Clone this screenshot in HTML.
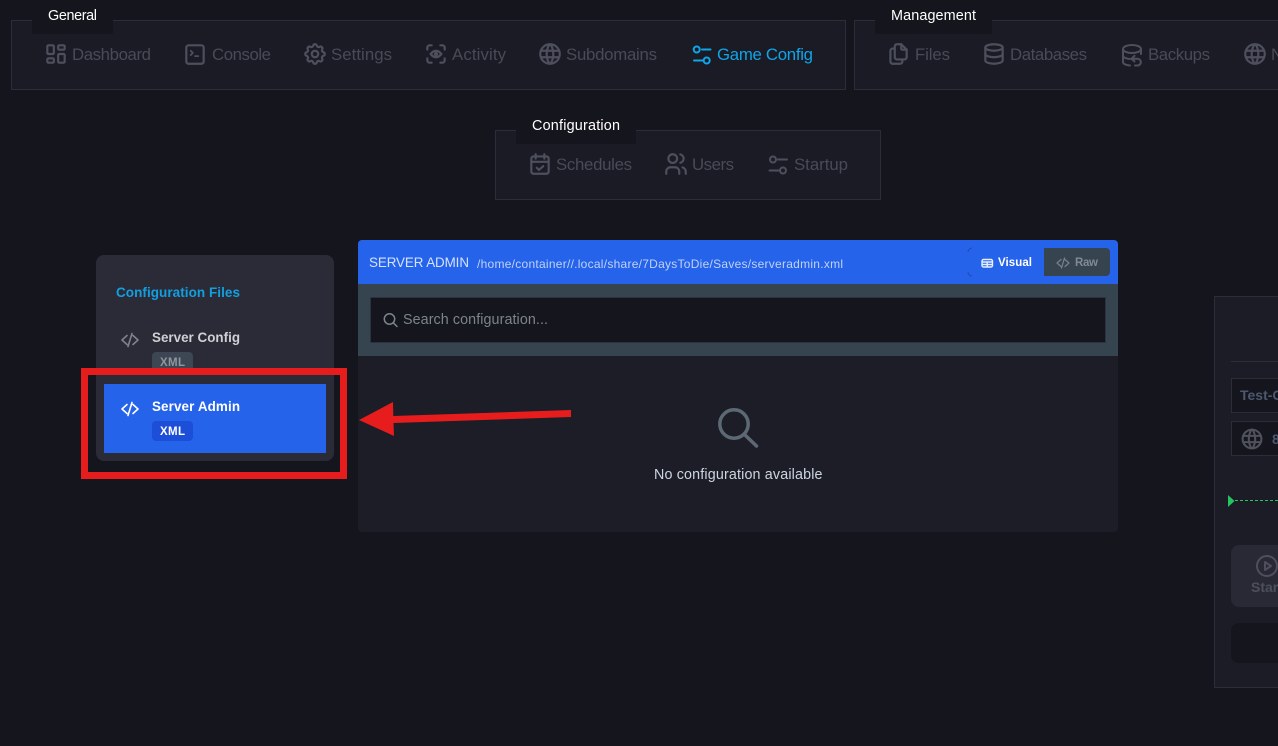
<!DOCTYPE html>
<html lang="en"><head><meta charset="utf-8"><title>Server Admin</title>
<style>
html,body{margin:0;padding:0;width:1278px;height:746px;overflow:hidden;background:#15151e}
svg{display:block}
text{font-family:"Liberation Sans",sans-serif}
.n{font-size:16.8px;fill:#484a56}
.l{font-size:14.4px;fill:#fff}
.i{fill:none;stroke:#4d505c;stroke-width:2;stroke-linecap:round;stroke-linejoin:round}
.b{font-weight:700}
</style></head><body>
<svg width="1278" height="746" viewBox="0 0 1278 746" xmlns="http://www.w3.org/2000/svg">
<rect width="1278" height="746" fill="#15151e"/>

<!-- nav boxes -->
<rect x="11.5" y="20.5" width="834" height="69" fill="#1a1b25" stroke="#2c2d3a"/>
<rect x="854.5" y="20.5" width="440" height="69" fill="#1a1b25" stroke="#2c2d3a"/>
<rect x="495.5" y="130.5" width="385" height="69" fill="#1a1b25" stroke="#2c2d3a"/>
<rect x="32" y="0" width="81" height="34" fill="#15151e"/>
<rect x="875" y="0" width="117" height="34" fill="#15151e"/>
<rect x="516" y="110" width="120" height="34" fill="#15151e"/>
<text class="l" x="48" y="20" textLength="49">General</text>
<text class="l" x="891" y="20" textLength="85">Management</text>
<text class="l" x="532" y="130" textLength="88">Configuration</text>

<text class="n" x="72" y="60" textLength="79">Dashboard</text>
<text class="n" x="212" y="60" textLength="59">Console</text>
<text class="n" x="331" y="60" textLength="61">Settings</text>
<text class="n" x="452" y="60" textLength="54">Activity</text>
<text class="n" x="566" y="60" textLength="91">Subdomains</text>
<text class="n" x="717" y="60" textLength="96" style="fill:#0ea5e9">Game Config</text>
<text class="n" x="915" y="60" textLength="35">Files</text>
<text class="n" x="1010" y="60" textLength="77">Databases</text>
<text class="n" x="1148" y="60" textLength="62">Backups</text>
<text class="n" x="1271" y="60">N</text>
<text class="n" x="556" y="170" textLength="76">Schedules</text>
<text class="n" x="692" y="170" textLength="42">Users</text>
<text class="n" x="794" y="170" textLength="54">Startup</text>

<!-- dashboard -->
<g class="i" transform="translate(43,41) scale(1.0833)"><path d="M5 4h4a1 1 0 0 1 1 1v6a1 1 0 0 1 -1 1h-4a1 1 0 0 1 -1 -1v-6a1 1 0 0 1 1 -1"/><path d="M5 16h4a1 1 0 0 1 1 1v2a1 1 0 0 1 -1 1h-4a1 1 0 0 1 -1 -1v-2a1 1 0 0 1 1 -1"/><path d="M15 12h4a1 1 0 0 1 1 1v6a1 1 0 0 1 -1 1h-4a1 1 0 0 1 -1 -1v-6a1 1 0 0 1 1 -1"/><path d="M15 4h4a1 1 0 0 1 1 1v2a1 1 0 0 1 -1 1h-4a1 1 0 0 1 -1 -1v-2a1 1 0 0 1 1 -1"/></g>
<!-- console -->
<g class="i" transform="translate(182,41) scale(1.0833)"><rect x="4" y="4" width="16" height="17" rx="2"/><path d="M8 9l2 2l-2 2M12 14h3" stroke-width="1.6"/></g>
<!-- settings -->
<g class="i" transform="translate(302,41) scale(1.0833)"><path d="M10.325 4.317c.426 -1.756 2.924 -1.756 3.35 0a1.724 1.724 0 0 0 2.573 1.066c1.543 -.94 3.31 .826 2.37 2.37a1.724 1.724 0 0 0 1.065 2.572c1.756 .426 1.756 2.924 0 3.35a1.724 1.724 0 0 0 -1.066 2.573c.94 1.543 -.826 3.31 -2.37 2.37a1.724 1.724 0 0 0 -2.572 1.065c-.426 1.756 -2.924 1.756 -3.35 0a1.724 1.724 0 0 0 -2.573 -1.066c-1.543 .94 -3.31 -.826 -2.37 -2.37a1.724 1.724 0 0 0 -1.065 -2.572c-1.756 -.426 -1.756 -2.924 0 -3.35a1.724 1.724 0 0 0 1.066 -2.573c-.94 -1.543 .826 -3.31 2.37 -2.37c1 .608 2.296 .07 2.572 -1.065z"/><circle cx="12" cy="12" r="3"/></g>
<!-- activity -->
<g class="i" transform="translate(423,41) scale(1.0833)"><path d="M4 8v-2a2 2 0 0 1 2 -2h2M4 16v2a2 2 0 0 0 2 2h2M16 4h2a2 2 0 0 1 2 2v2M16 20h2a2 2 0 0 0 2 -2v-2"/><path d="M7 12c3.333 -4 6.667 -4 10 0c-3.333 4 -6.667 4 -10 0"/><circle cx="12" cy="12" r="1"/></g>
<!-- subdomains -->
<g class="i" transform="translate(537,41) scale(1.0833)"><path d="M3 12a9 9 0 1 0 18 0a9 9 0 0 0 -18 0M3.6 9h16.8M3.6 15h16.8M11.5 3a17 17 0 0 0 0 18M12.5 3a17 17 0 0 1 0 18"/></g>
<!-- game config -->
<g fill="none" stroke="#0ea5e9" stroke-width="2" stroke-linecap="round"><circle cx="696.7" cy="49.5" r="3"/><path d="M702 49.5h8.5M694 60.5h9"/><circle cx="706.7" cy="60.5" r="3"/></g>
<!-- files -->
<g class="i" transform="translate(885,41) scale(1.0833)"><path d="M15 3v4a1 1 0 0 0 1 1h4"/><path d="M18 17h-7a2 2 0 0 1 -2 -2v-10a2 2 0 0 1 2 -2h4l5 5v7a2 2 0 0 1 -2 2z"/><path d="M16 17v2a2 2 0 0 1 -2 2h-7a2 2 0 0 1 -2 -2v-10a2 2 0 0 1 2 -2h2"/></g>
<!-- databases -->
<g class="i" transform="translate(981,41) scale(1.0833)"><path d="M4 6a8 3 0 1 0 16 0a8 3 0 1 0 -16 0"/><path d="M4 6v6a8 3 0 0 0 16 0v-6"/><path d="M4 12v6a8 3 0 0 0 16 0v-6"/></g>
<!-- backups -->
<g class="i"><path d="M1123 49a9 4 0 1 0 18 0a9 4 0 1 0 -18 0"/><path d="M1123 49v13c0 1.800 2.500 3 7 3.500M1141 49v5M1123 55.500c0 1.800 2.500 3 7 3.500"/><path d="M1134.500 55.800l-3 3l3 2.700M1132 58.800h5.500a3.300 3.300 0 0 1 0 6.700h-2.500"/></g>
<!-- network -->
<g class="i" transform="translate(1242,41) scale(1.0833)"><path d="M3 12a9 9 0 1 0 18 0a9 9 0 0 0 -18 0M3.6 9h16.8M3.6 15h16.8M11.5 3a17 17 0 0 0 0 18M12.5 3a17 17 0 0 1 0 18"/></g>
<!-- schedules -->
<g class="i" transform="translate(527,151) scale(1.0833)"><rect x="4" y="5" width="16" height="16" rx="2"/><path d="M16 3v4M8 3v4M4 10h16"/><path d="M9 15.500l2 2l4 -3.500"/></g>
<!-- users -->
<g class="i" transform="translate(663,151) scale(1.0833)"><path d="M5 7a4 4 0 1 0 8 0a4 4 0 1 0 -8 0"/><path d="M3 21v-2a4 4 0 0 1 4 -4h4a4 4 0 0 1 4 4v2"/><path d="M16 3.130a4 4 0 0 1 0 7.750"/><path d="M21 21v-2a4 4 0 0 0 -3 -3.850"/></g>
<!-- startup -->
<g fill="none" stroke="#4d505c" stroke-width="2" stroke-linecap="round"><circle cx="773" cy="159.500" r="3"/><path d="M778 159.500h9M769.500 170.500h9"/><circle cx="783" cy="170.500" r="3"/></g>

<!-- sidebar -->
<rect x="96" y="255" width="238" height="206" rx="8" fill="#2b2b38"/>
<text class="b" x="116" y="297" font-size="13.500" textLength="124" fill="#129fe0">Configuration Files</text>
<path d="M127 335.500l-5 4.500l5 4.500M133 335.500l5 4.500l-5 4.500M132 333.500l-4 13" fill="none" stroke="#7f828c" stroke-width="1.600" stroke-linecap="round" stroke-linejoin="round"/>
<text class="b" x="152" y="342" font-size="13.400" textLength="88" fill="#cfd0d4">Server Config</text>
<rect x="152" y="352" width="41" height="20" rx="4" fill="#3c4753"/>
<text class="b" x="160" y="366" font-size="11.500" textLength="25" fill="#8f969e">XML</text>

<rect x="104" y="384" width="222" height="69" fill="#2563eb"/>
<path d="M127 404.500l-5 4.500l5 4.500M133 404.500l5 4.500l-5 4.500M132 402.500l-4 13" fill="none" stroke="#fff" stroke-width="1.600" stroke-linecap="round" stroke-linejoin="round"/>
<text class="b" x="152" y="411" font-size="13.400" textLength="88" fill="#fff">Server Admin</text>
<rect x="152" y="421" width="41" height="20" rx="4" fill="#1d4ed8"/>
<text class="b" x="160" y="435" font-size="11.500" textLength="25" fill="#fff">XML</text>

<!-- main panel -->
<path d="M358 284v-40a4 4 0 0 1 4 -4h752a4 4 0 0 1 4 4v40z" fill="#2563eb"/>
<rect x="358" y="284" width="760" height="72" fill="#36444f"/>
<path d="M358 356h760v172a4 4 0 0 1 -4 4h-752a4 4 0 0 1 -4 -4z" fill="#1c1d27"/>
<text x="369" y="267" font-size="13.400" textLength="100" fill="#d6e2fb">SERVER ADMIN</text>
<text x="477" y="268" font-size="12" textLength="366" fill="#c0d2f7">/home/container//.local/share/7DaysToDie/Saves/serveradmin.xml</text>
<path d="M972 248a4 4 0 0 0 -4 4M968 272a4 4 0 0 0 4 4" fill="none" stroke="#1f49b0"/>
<g fill="none" stroke="#e8eefc" stroke-width="1.400"><rect x="982" y="259.500" width="10.500" height="7.500" rx="1.500"/><path d="M982 262h10.500M982 264.500h10.500M987.200 262v5"/></g>
<text class="b" x="998" y="266" font-size="11.500" textLength="34" fill="#fff">Visual</text>
<path d="M1044 248h62a4 4 0 0 1 4 4v20a4 4 0 0 1 -4 4h-62z" fill="#36444f"/>
<path d="M1061 259.500l-4 3.500l4 3.500M1065 259.500l4 3.500l-4 3.500M1064.500 258l-3 10" fill="none" stroke="#76808a" stroke-width="1.300" stroke-linecap="round" stroke-linejoin="round"/>
<text class="b" x="1075" y="266" font-size="11.500" textLength="23" fill="#818a92">Raw</text>

<rect x="370.500" y="297.500" width="735" height="45" fill="#14151d" stroke="#2d3240"/>
<g fill="none" stroke="#7c838a" stroke-width="1.500" stroke-linecap="round"><circle cx="389.500" cy="319" r="5.200"/><path d="M393.300 322.800l3.700 3.700"/></g>
<text x="403" y="324" font-size="14.300" textLength="145" fill="#7d848b">Search configuration...</text>

<g fill="none" stroke="#5c6873" stroke-width="3.500" stroke-linecap="round"><circle cx="734" cy="424" r="14.200"/><path d="M745 435l11.500 11"/></g>
<text x="654" y="479" font-size="14.300" textLength="168.500" fill="#ccd6df">No configuration available</text>

<!-- right panel -->
<rect x="1214.500" y="296.500" width="80" height="391" fill="#1b1c26" stroke="#2c2d3a"/>
<path d="M1231 361.500h60" stroke="#2c2d3a"/>
<rect x="1231.500" y="378.500" width="60" height="34" fill="#14151d" stroke="#2c2d3a"/>
<text class="b" x="1240" y="400" font-size="14" fill="#4d5870">Test-C</text>
<rect x="1231.500" y="421.500" width="60" height="34" fill="#14151d" stroke="#2c2d3a"/>
<g class="i" transform="translate(1239.500,426.500) scale(1.0417)" style="stroke:#4f525d"><path d="M3 12a9 9 0 1 0 18 0a9 9 0 0 0 -18 0M3.600 9h16.800M3.600 15h16.800M11.500 3a17 17 0 0 0 0 18M12.500 3a17 17 0 0 1 0 18"/></g>
<text class="b" x="1272" y="444" font-size="14" fill="#4d5870">8</text>
<path d="M1228 495l6.500 6l-6.500 6z" fill="#22c55e"/>
<path d="M1235 500.500h43" stroke="#22c55e" stroke-dasharray="3 2"/>
<rect x="1231" y="545" width="70" height="62" rx="8" fill="#282935"/>
<g fill="none" stroke="#4d505c" stroke-width="2" stroke-linejoin="round"><circle cx="1267" cy="566" r="10"/><path d="M1265 562l6 4l-6 4z"/></g>
<text class="b" x="1251" y="592" font-size="14" fill="#4d4f5b">Start</text>
<rect x="1231" y="623" width="70" height="40" rx="8" fill="#14151d"/>

<!-- annotation -->
<rect x="84.500" y="371.500" width="259" height="104" fill="none" stroke="#e71d1d" stroke-width="7"/>
<path d="M359 420l34 -18l.3 14l177.700 -6v7l-177.500 6l.5 13z" fill="#e71d1d"/>
</svg>
</body></html>
